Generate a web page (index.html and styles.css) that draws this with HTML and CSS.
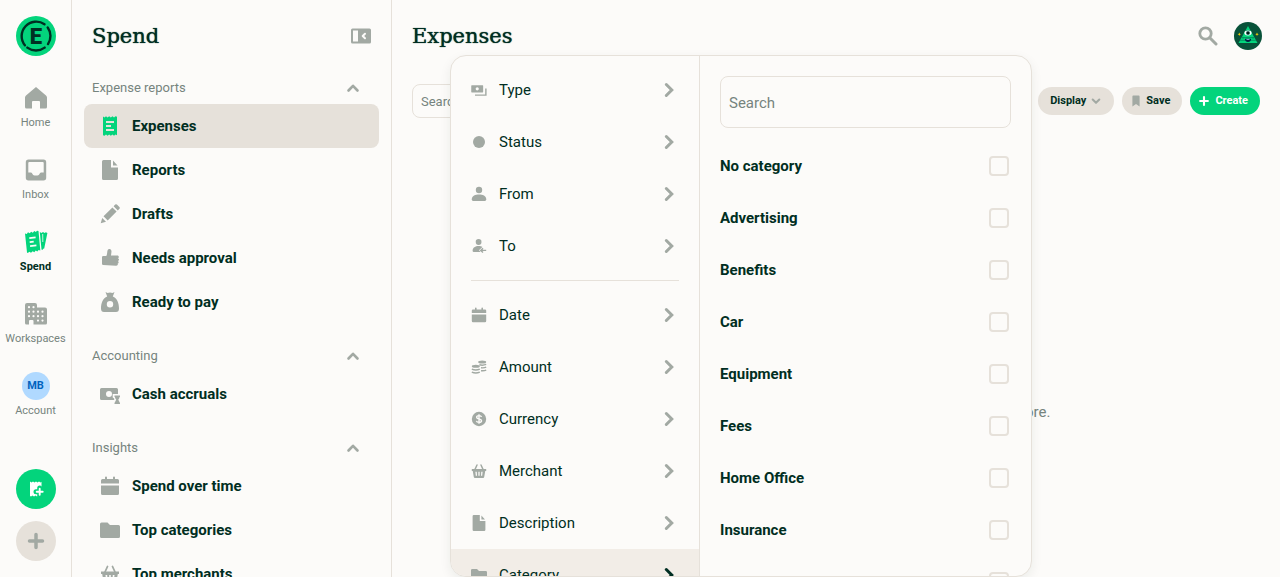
FILE: index.html
```html
<!DOCTYPE html>
<html lang="en">
<head>
    <meta charset="UTF-8">
    <meta name="viewport" content="width=device-width, initial-scale=1.0">
    <title>Expenses</title>
    <link rel="stylesheet" href="styles.css">
</head>
<body>
    <!-- Shared icons -->
    <svg class="sprite" aria-hidden="true">
        <symbol id="i-up" viewBox="0 0 20 20"><path d="M5.500 12.500l4.500-4.700 4.500 4.700" fill="none" stroke="currentColor" stroke-width="2.600" stroke-linecap="round" stroke-linejoin="round"/></symbol>
        <symbol id="i-down" viewBox="0 0 20 20"><path d="M4.500 7.500l5.500 5.500 5.500-5.500" fill="none" stroke="currentColor" stroke-width="3.400" stroke-linecap="round" stroke-linejoin="round"/></symbol>
        <symbol id="i-right" viewBox="0 0 20 20"><path d="M7.300 4.500l5.500 5.500-5.500 5.500" fill="none" stroke="currentColor" stroke-width="3" stroke-linecap="round" stroke-linejoin="miter"/></symbol>
        <symbol id="i-plus" viewBox="0 0 20 20"><path d="M10 3.500v13M3.500 10h13" fill="none" stroke="currentColor" stroke-width="3.500" stroke-linecap="round"/></symbol>
        <symbol id="i-receipt" viewBox="0 0 20 20"><path fill-rule="evenodd" d="M3 .5L4.500 1.500 6 .2 7.500 1.500 9.200 .2 10.800 1.500 12.500 .2 14 1.500 15.500 .2 17 .8V19.300L15.500 18.500 14 19.800 12.500 18.500 10.800 19.800 9.200 18.500 7.500 19.800 6 18.500 4.500 19.800 3 19.300zM6 5v2h8V5zM6 9v2h5V9zM6 13v2h8v-2z"/></symbol>
        <symbol id="i-doc" viewBox="0 0 20 20"><path d="M3.500 0H11v7.500h7V18.500a1.500 1.500 0 0 1-1.500 1.500h-13A1.500 1.500 0 0 1 2 18.500v-17A1.500 1.500 0 0 1 3.500 0zM13 .500L17.500 5.500H13z"/></symbol>
        <symbol id="i-pencil" viewBox="0 0 20 20"><path d="M13.600 2.200l1.600-1.600a1.200 1.200 0 0 1 1.700 0l2.500 2.500a1.200 1.200 0 0 1 0 1.700l-1.600 1.600zM12.400 3.400l4.200 4.200-8.900 8.900-4.200-4.200zM2.200 14l3.800 3.800-5.300 1.500z"/></symbol>
        <symbol id="i-thumb" viewBox="0 0 20 20"><path d="M3.200 8H6.300C7.500 6 7 3.500 7.700 2c.6-1.300 3.300-1.300 3.700.8.3 1.700-.4 3.300-.4 4.700h6.200c2 0 2.100 2.400.6 2.700 1.700.4 1.500 2.600 0 2.800 1.300.4 1 2.400-.3 2.500.8.7.2 2.200-1.300 2.200L3.200 17A1.200 1.200 0 0 1 2 15.800V9.200A1.200 1.200 0 0 1 3.200 8z"/></symbol>
        <symbol id="i-bag" viewBox="0 0 20 20"><path fill-rule="evenodd" d="M5.500 0l2 1 2.500-.5L12.500 1l2-1L12.800 4.500C17 6 19 11 19 16.500 19 19 18 20 16 20H4c-2 0-3-1-3-3.500C1 11 3 6 7.200 4.500zM10 9a3.200 3.200 0 1 0 0 6.400A3.200 3.200 0 0 0 10 9z"/></symbol>
        <symbol id="i-accrual" viewBox="0 0 20 20"><path fill-rule="evenodd" d="M1.500 4h15A1.500 1.500 0 0 1 18 5.500V10h-5.300v3.500l1.500 1V16H1.500A1.500 1.500 0 0 1 0 14.500v-9A1.500 1.500 0 0 1 1.500 4zM9 7a3 3 0 1 0 0 6 3 3 0 0 0 0-6zM14.500 11.500H20V13h-.5c0 1.500-1 2-1.200 2.700.2.800 1.200 1.500 1.200 2.800h.5V20h-5.500v-1.500h.5c0-1.300 1-2 1.200-2.800-.2-.7-1.200-1.200-1.200-2.700h-.5z"/></symbol>
        <symbol id="i-calendar" viewBox="0 0 20 20"><path d="M5 1.500a1 1 0 0 1 2 0V3h6V1.500a1 1 0 0 1 2 0V3h2.500A1.500 1.500 0 0 1 19 4.500V7.500H1v-3A1.500 1.500 0 0 1 2.500 3H5zM1 9.500h18V17.500a1.500 1.500 0 0 1-1.500 1.500h-15A1.500 1.500 0 0 1 1 17.500z"/></symbol>
        <symbol id="i-folder" viewBox="0 0 20 20"><path d="M1.500 2.500H7.500L10 5h8.500A1.500 1.500 0 0 1 20 6.500V16.500A1.500 1.500 0 0 1 18.500 18h-17A1.500 1.500 0 0 1 0 16.500V4A1.500 1.500 0 0 1 1.500 2.500z"/></symbol>
        <symbol id="i-basket" viewBox="0 0 20 20"><path fill-rule="evenodd" d="M1 7.500h18V10h-1.200l-1.300 7.500a1.500 1.500 0 0 1-1.500 1.300H5a1.500 1.500 0 0 1-1.500-1.300L2.200 10H1zM5.500 11l.5 5h1.500l-.3-5zM9.200 11v5h1.600v-5zM12.800 11l-.3 5H14l.5-5z"/><path d="M5 8l2.500-5.500M15 8l-2.500-5.500" fill="none" stroke="currentColor" stroke-width="1.800" stroke-linecap="round"/></symbol>
        <symbol id="i-cash" viewBox="0 0 20 20"><path fill-rule="evenodd" d="M1 4h13.500a.7.700 0 0 1 .7.700V12.300a.7.700 0 0 1-.7.700H1a.7.700 0 0 1-.7-.7V4.700A.7.700 0 0 1 1 4zM7.800 6.500a2 2 0 1 0 0 4 2 2 0 0 0 0-4z"/><path d="M17.700 8v7.500H5v1.800h14.500V8z"/></symbol>
        <symbol id="i-dot" viewBox="0 0 20 20"><circle cx="10" cy="10" r="7.500"/></symbol>
        <symbol id="i-user" viewBox="0 0 20 20"><circle cx="10" cy="5" r="4"/><path d="M1 16.500C1 12 5.500 10.500 10 10.500s9 1.500 9 6a2.300 2.300 0 0 1-2.300 2.300H3.300A2.300 2.300 0 0 1 1 16.500z"/></symbol>
        <symbol id="i-user-to" viewBox="0 0 20 20"><circle cx="9.500" cy="5" r="3.600"/><path d="M2 16C2 12 5.500 10 9.500 10c2 0 3.500.4 4.800 1.300L10 15.200l2 2.300H3.500A1.500 1.500 0 0 1 2 16z"/><path d="M19 15.500h-6M15 12.800l-2.800 2.700 2.800 2.700" fill="none" stroke="currentColor" stroke-width="1.800"/></symbol>
        <symbol id="i-coins" viewBox="0 0 20 20"><ellipse cx="14" cy="3.800" rx="5" ry="1.900"/><ellipse cx="6" cy="9" rx="5" ry="1.900"/><path d="M10.500 7.200q4 1.300 8.500-.4M12.500 10.900q3.500.6 6.500-.7M12.500 14.600q3.500.6 6.500-.7M1 12.600q5 2.200 10 0M1 16.400q5 2.200 10 0" fill="none" stroke="currentColor" stroke-width="1.800"/></symbol>
        <symbol id="i-bookmark" viewBox="0 0 20 20"><path d="M5.500 1h9A1.500 1.500 0 0 1 16 2.500V19l-6-4-6 4V2.500A1.500 1.500 0 0 1 5.500 1z"/></symbol>
    </svg>

    <div class="app">
        <!-- Icon rail -->
        <nav class="rail" aria-label="Main">
            <a class="logo" href="#" aria-label="Home page">
                <svg width="40" height="40" viewBox="0 0 40 40">
                    <circle cx="20" cy="20" r="20" fill="#03d47c"/>
                    <path d="M8.900 29.300A14.500 14.500 0 0 1 28.500 8.300M31.700 11.500A14.500 14.500 0 0 1 32 28.100M28.700 31.600A14.500 14.500 0 0 1 11.300 31.600" fill="none" stroke="#002e22" stroke-width="2.400" stroke-linecap="round"/>
                    <text class="logo-letter" x="20" y="28" text-anchor="middle">E</text>
                </svg>
            </a>
            <a class="rail-item" href="#">
                <svg width="24" height="24" viewBox="0 0 24 24"><path d="M12 1l10 8.500c.6.500 1 1.200 1 2V21a1.500 1.500 0 0 1-1.500 1.500H16V16a1 1 0 0 0-1-1H9a1 1 0 0 0-1 1v6.500H2.500A1.500 1.500 0 0 1 1 21v-9.500c0-.8.4-1.500 1-2z"/></svg>
                <span>Home</span>
            </a>
            <a class="rail-item" href="#">
                <svg width="24" height="24" viewBox="0 0 24 24"><path fill-rule="evenodd" d="M4.500 1.500h15a2.700 2.700 0 0 1 2.700 2.700v15.600a2.700 2.700 0 0 1-2.700 2.700h-15a2.700 2.700 0 0 1-2.700-2.700V4.200a2.700 2.700 0 0 1 2.700-2.700zM5.300 4a1 1 0 0 0-1 1v9.500H7c1.500 0 1.300 3 3.500 3h3c2.200 0 2-3 3.500-3h2.700V5a1 1 0 0 0-1-1z"/></svg>
                <span>Inbox</span>
            </a>
            <a class="rail-item active" href="#">
                <svg width="24" height="24" viewBox="0 0 24 24"><path fill-rule="evenodd" d="M1 3.500l1.800.4L4 2.300l1.700 1L7.200 1.700l1.600 1L10.300 1l1.500 1L13 .8l1.500.3 1.800 19.500-1.700-.5-1.300 1.500-1.600-1-1.400 1.600-1.600-1L7 22.800l-1.600-1-1.600 1.200-.8-.4zM5.200 7.300l.2 1.600 6.300-.7-.2-1.600zM5.600 11.300l.2 1.600 4-.5-.2-1.600zM6 15.300l.2 1.600 6.300-.7-.2-1.600z"/><path d="M15.800 2l1.700 1L19 2l1.500 1 1.300-.8 1.600.8-3.200 15.500-1 .2-.8 1.300-.9-.5z"/><path d="M18.700 4l.1 8" stroke="#fcfbf9" stroke-width=".8"/></svg>
                <span>Spend</span>
            </a>
            <a class="rail-item" href="#">
                <svg width="24" height="24" viewBox="0 0 24 24"><path fill-rule="evenodd" d="M3 1h8a2 2 0 0 1 2 2v2.500h8a2 2 0 0 1 2 2V21a1.500 1.500 0 0 1-1.500 1.500H9.500V19a1 1 0 0 0-1-1H6a1 1 0 0 0-1 1v3.500H2.500A1.500 1.500 0 0 1 1 21V3a2 2 0 0 1 2-2z"/><path d="M5 5.200h5M5 9.700h15M5 14.200h15M14 18.600h6" fill="none" stroke="#fcfbf9" stroke-width="2.200" stroke-linecap="round" stroke-dasharray="0 4.500"/></svg>
                <span>Workspaces</span>
            </a>
            <a class="rail-item" href="#">
                <b class="initials">MB</b>
                <span>Account</span>
            </a>
            <div class="rail-actions">
                <button class="fab fab-green" type="button" aria-label="Scan receipt">
                    <svg width="20" height="20" viewBox="0 0 20 20"><path d="M4 2.500l1.500 1L7 2.500l1.500 1 1.500-1 1.500 1 1.500-1 1.500 1 1-.8V17l-1.500.6-1.500-1-1.500 1-1.500-1-1.500 1-1.500-1-1.500 1-1-.6z"/><path d="M13.700 9v7.500M10 12.700h7.500" stroke="#03d47c" stroke-width="5" stroke-linecap="round"/><path d="M13.700 9.700v6M10.700 12.700h6" stroke="currentColor" stroke-width="1.900" stroke-linecap="round"/></svg>
                </button>
                <button class="fab" type="button" aria-label="Create">
                    <svg width="20" height="20"><use href="#i-plus"/></svg>
                </button>
            </div>
        </nav>

        <!-- Spend sidebar -->
        <aside class="sidebar">
            <header class="sidebar-header">
                <h2>Spend</h2>
                <button class="icon-button" type="button" aria-label="Collapse sidebar">
                    <svg width="20" height="20" viewBox="0 0 20 20"><path fill-rule="evenodd" d="M1.500 2.500h17A1.500 1.500 0 0 1 20 4v12a1.500 1.500 0 0 1-1.500 1.500h-17A1.500 1.500 0 0 1 0 16V4a1.500 1.500 0 0 1 1.500-1.500zM2 4.500v11h5v-11z"/><path d="M14 7.700L11.700 10l2.300 2.300" fill="none" stroke="#fcfbf9" stroke-width="2" stroke-linecap="round" stroke-linejoin="round"/></svg>
                </button>
            </header>

            <section class="group">
                <button class="group-title" type="button">Expense reports <svg width="20" height="20"><use href="#i-up"/></svg></button>
                <a class="link selected" href="#"><svg width="20" height="20"><use href="#i-receipt"/></svg>Expenses</a>
                <a class="link" href="#"><svg width="20" height="20"><use href="#i-doc"/></svg>Reports</a>
                <a class="link" href="#"><svg width="20" height="20"><use href="#i-pencil"/></svg>Drafts</a>
                <a class="link" href="#"><svg width="20" height="20"><use href="#i-thumb"/></svg>Needs approval</a>
                <a class="link" href="#"><svg width="20" height="20"><use href="#i-bag"/></svg>Ready to pay</a>
            </section>

            <section class="group">
                <button class="group-title" type="button">Accounting <svg width="20" height="20"><use href="#i-up"/></svg></button>
                <a class="link" href="#"><svg width="20" height="20"><use href="#i-accrual"/></svg>Cash accruals</a>
            </section>

            <section class="group">
                <button class="group-title" type="button">Insights <svg width="20" height="20"><use href="#i-up"/></svg></button>
                <a class="link" href="#"><svg width="20" height="20"><use href="#i-calendar"/></svg>Spend over time</a>
                <a class="link" href="#"><svg width="20" height="20"><use href="#i-folder"/></svg>Top categories</a>
                <a class="link" href="#"><svg width="20" height="20"><use href="#i-basket"/></svg>Top merchants</a>
            </section>
        </aside>

        <!-- Expenses page -->
        <main class="content">
            <header class="content-header">
                <h1>Expenses</h1>
                <button class="icon-button" type="button" aria-label="Search">
                    <svg width="20" height="20" viewBox="0 0 20 20"><circle cx="7.500" cy="7.500" r="5.700" fill="none" stroke="currentColor" stroke-width="2.800"/><path d="M12 12l6 6" stroke="currentColor" stroke-width="3" stroke-linecap="round"/></svg>
                </button>
                <a class="profile" href="#" aria-label="Profile">
                    <svg width="28" height="28" viewBox="0 0 28 28">
                        <circle cx="14" cy="14" r="14" fill="#085239"/>
                        <path d="M14 4l9.500 17h-19z" fill="#03d47c"/>
                        <path d="M11.500 8.500h5M7.500 15.500h13M6 18.300h16M9 17v-1.500M19 17v-1.500" stroke="#008c59" stroke-width=".8"/>
                        <ellipse cx="14" cy="11" rx="3.600" ry="2.400" fill="#fff"/>
                        <circle cx="14" cy="11" r="2" fill="#28736d"/>
                        <circle cx="14" cy="11" r="1.300" fill="#001a12"/>
                        <path d="M10.800 16.800h6.400q-.5 3.200-3.200 3.200t-3.200-3.200z" fill="#002140"/>
                        <path d="M12.500 17.500h3" stroke="#b0d9ff" stroke-width=".7"/>
                        <path d="M5.300 10.500l.5 1.200 1.200.5-1.200.5-.5 1.200-.5-1.200-1.200-.5 1.200-.5zM23 10.500l.5 1.200 1.200.5-1.200.5-.5 1.200-.5-1.200-1.200-.5 1.200-.5z" fill="#fed607"/>
                    </svg>
                </a>
            </header>

            <div class="toolbar">
                <input class="search" type="search" placeholder="Search for something" aria-label="Search expenses">
                <button class="pill" type="button">Display <svg width="12" height="12"><use href="#i-down"/></svg></button>
                <button class="pill pill-icon" type="button"><svg width="12" height="12"><use href="#i-bookmark"/></svg> Save</button>
                <button class="pill pill-icon pill-green" type="button"><svg width="12" height="12"><use href="#i-plus"/></svg> Create</button>
            </div>

            <p class="empty">Nothing to show yet. Try changing the filters, or create one more.</p>
        </main>
    </div>

    <!-- Filters popover -->
    <div class="popover">
        <div class="filters">
            <button class="filter" type="button"><svg class="filter-icon"><use href="#i-cash"/></svg>Type<svg class="arrow"><use href="#i-right"/></svg></button>
            <button class="filter" type="button"><svg class="filter-icon"><use href="#i-dot"/></svg>Status<svg class="arrow"><use href="#i-right"/></svg></button>
            <button class="filter" type="button"><svg class="filter-icon"><use href="#i-user"/></svg>From<svg class="arrow"><use href="#i-right"/></svg></button>
            <button class="filter" type="button"><svg class="filter-icon"><use href="#i-user-to"/></svg>To<svg class="arrow"><use href="#i-right"/></svg></button>
            <hr>
            <button class="filter" type="button"><svg class="filter-icon"><use href="#i-calendar"/></svg>Date<svg class="arrow"><use href="#i-right"/></svg></button>
            <button class="filter" type="button"><svg class="filter-icon"><use href="#i-coins"/></svg>Amount<svg class="arrow"><use href="#i-right"/></svg></button>
            <button class="filter" type="button">
                <svg class="filter-icon" viewBox="0 0 20 20"><circle cx="10" cy="10" r="9"/><path d="M13.200 7.500c-.5-1.200-1.700-1.700-3.200-1.700-1.800 0-3 .8-3 2.100 0 3 6.200 1.200 6.200 4.200 0 1.300-1.300 2.100-3.200 2.100-1.700 0-2.900-.6-3.300-1.900M10 4v12" fill="none" stroke="#fcfbf9" stroke-width="1.700"/></svg>Currency<svg class="arrow"><use href="#i-right"/></svg>
            </button>
            <button class="filter" type="button"><svg class="filter-icon"><use href="#i-basket"/></svg>Merchant<svg class="arrow"><use href="#i-right"/></svg></button>
            <button class="filter" type="button"><svg class="filter-icon"><use href="#i-doc"/></svg>Description<svg class="arrow"><use href="#i-right"/></svg></button>
            <button class="filter current" type="button"><svg class="filter-icon"><use href="#i-folder"/></svg>Category<svg class="arrow"><use href="#i-right"/></svg></button>
        </div>
        <div class="options">
            <input class="options-search" type="search" placeholder="Search" aria-label="Search categories">
            <label class="option">No category <input type="checkbox"></label>
            <label class="option">Advertising <input type="checkbox"></label>
            <label class="option">Benefits <input type="checkbox"></label>
            <label class="option">Car <input type="checkbox"></label>
            <label class="option">Equipment <input type="checkbox"></label>
            <label class="option">Fees <input type="checkbox"></label>
            <label class="option">Home Office <input type="checkbox"></label>
            <label class="option">Insurance <input type="checkbox"></label>
            <label class="option">Interest <input type="checkbox"></label>
        </div>
    </div>
</body>
</html>
```

FILE: styles.css
```css
* {
    box-sizing: border-box;
}

body {
    margin: 0;
    font-family: Roboto, "Liberation Sans", sans-serif;
    font-size: 15px;
    line-height: 20px;
    background-color: #fcfbf9;
    color: #002e22;
    overflow: hidden;
}

a {
    color: inherit;
    text-decoration: none;
}

button {
    padding: 0;
    border: none;
    background: none;
    color: inherit;
    font: inherit;
    cursor: pointer;
}

svg {
    flex: none;
    fill: currentColor;
}

h1, h2 {
    margin: 0;
    font-family: "DejaVu Serif", serif;
    font-size: 21px;
    font-weight: normal;
    line-height: 28px;
    text-shadow: 0 0 1px #002e22;
}

.sprite {
    position: absolute;
    width: 0;
    height: 0;
}

.app {
    display: flex;
    height: 100vh;
}

/* Icon rail */
.rail {
    flex: none;
    display: flex;
    flex-direction: column;
    width: 72px;
    border-right: 1px solid #e6e1da;
}

.logo {
    display: flex;
    padding: 16px;
}

.logo-letter {
    font-size: 22px;
    font-weight: 900;
    fill: #002e22;
}

.rail-item {
    display: flex;
    flex-direction: column;
    align-items: center;
    gap: 5px;
    height: 72px;
    padding-top: 14px;
    font-size: 11px;
    line-height: 16px;
    color: #76847e;
}

.rail-item svg {
    color: #a2a9a3;
}

.rail-item.active {
    color: #002e22;
    font-weight: bold;
}

.rail-item.active svg {
    color: #03d47c;
}

.initials {
    width: 28px;
    height: 28px;
    margin: -2px 0;
    border-radius: 50%;
    background-color: #b0d9ff;
    color: #0164bf;
    line-height: 28px;
    text-align: center;
}

.rail-actions {
    display: flex;
    flex-direction: column;
    gap: 12px;
    margin-top: auto;
    padding: 16px;
}

.fab {
    display: flex;
    align-items: center;
    justify-content: center;
    width: 40px;
    height: 40px;
    border-radius: 50%;
    background-color: #e6e1da;
    color: #a2a9a3;
}

.fab-green {
    background-color: #03d47c;
    color: #fff;
}

/* Sidebar */
.sidebar {
    flex: none;
    width: 320px;
    border-right: 1px solid #e6e1da;
    overflow: hidden;
}

.sidebar-header {
    display: flex;
    align-items: center;
    justify-content: space-between;
    height: 72px;
    padding: 0 20px;
}

.icon-button {
    display: flex;
    color: #a2a9a3;
}

.group {
    margin-bottom: 16px;
    padding: 0 12px;
}

.group-title {
    display: flex;
    align-items: center;
    justify-content: space-between;
    width: 100%;
    height: 32px;
    padding: 0 16px 0 8px;
    font-size: 13px;
    color: #76847e;
}

.group-title svg {
    color: #a2a9a3;
}

.link {
    display: flex;
    align-items: center;
    gap: 12px;
    height: 44px;
    padding: 0 16px;
    border-radius: 8px;
    font-weight: bold;
}

.link svg {
    color: #a2a9a3;
}

.link.selected {
    background-color: #e6e1da;
}

.link.selected svg {
    color: #03d47c;
}

/* Content */
.content {
    flex: 1;
    display: flex;
    flex-direction: column;
    min-width: 0;
}

.content-header {
    display: flex;
    align-items: center;
    gap: 16px;
    height: 72px;
    padding: 0 18px 0 20px;
}

.content-header h1 {
    flex: 1;
}

.profile {
    display: flex;
}

.toolbar {
    display: flex;
    align-items: center;
    gap: 8px;
    padding: 12px 20px;
}

input {
    border: 1px solid #e6e1da;
    border-radius: 8px;
    background-color: transparent;
    color: inherit;
    font: inherit;
}

input::placeholder {
    color: #76847e;
    opacity: 1;
}

.search {
    flex: 1;
    min-width: 0;
    height: 34px;
    padding: 0 8px;
    font-size: 13px;
}

.pill {
    display: flex;
    align-items: center;
    gap: 4px;
    height: 28px;
    padding: 0 12px;
    border-radius: 14px;
    background-color: #e6e1da;
    font-size: 11px;
    font-weight: bold;
}

.pill svg {
    color: #a2a9a3;
}

.pill-icon {
    padding-left: 8px;
}

.pill-green,
.pill-green svg {
    color: #fff;
}

.pill-green {
    gap: 5px;
    background-color: #03d47c;
}

.empty {
    margin: auto;
    padding-top: 116px;
    color: #76847e;
    text-align: center;
}

/* Filters popover */
.popover {
    position: absolute;
    top: 55px;
    bottom: 0;
    left: 450px;
    display: flex;
    width: 582px;
    border: 1px solid #e6e1da;
    border-radius: 16px;
    background-color: #fcfbf9;
    box-shadow: 0 4px 12px rgba(0, 46, 34, 0.07);
    overflow: hidden;
}

.filters {
    flex: none;
    width: 249px;
    padding: 8px 0;
    border-right: 1px solid #e6e1da;
}

.filters hr {
    height: 1px;
    margin: 8px 20px;
    border: none;
    background-color: #e6e1da;
}

.filter {
    display: flex;
    align-items: center;
    width: 100%;
    height: 52px;
    padding: 0 20px;
}

.filter-icon {
    width: 16px;
    height: 16px;
    margin-right: 12px;
    color: #a2a9a3;
}

.arrow {
    width: 20px;
    height: 20px;
    margin-left: auto;
    color: #a2a9a3;
}

.filter.current {
    background-color: #f2ede7;
}

.filter.current .arrow {
    color: #002e22;
}

.options {
    flex: 1;
    padding: 20px;
}

.options-search {
    width: 100%;
    height: 52px;
    margin-bottom: 12px;
    padding: 2px 8px 0;
}

.option {
    display: flex;
    align-items: center;
    justify-content: space-between;
    height: 52px;
    padding-right: 2px;
    font-weight: bold;
}

.option input {
    appearance: none;
    width: 20px;
    height: 20px;
    margin: 0;
    border-width: 2px;
    border-radius: 4px;
}
```
